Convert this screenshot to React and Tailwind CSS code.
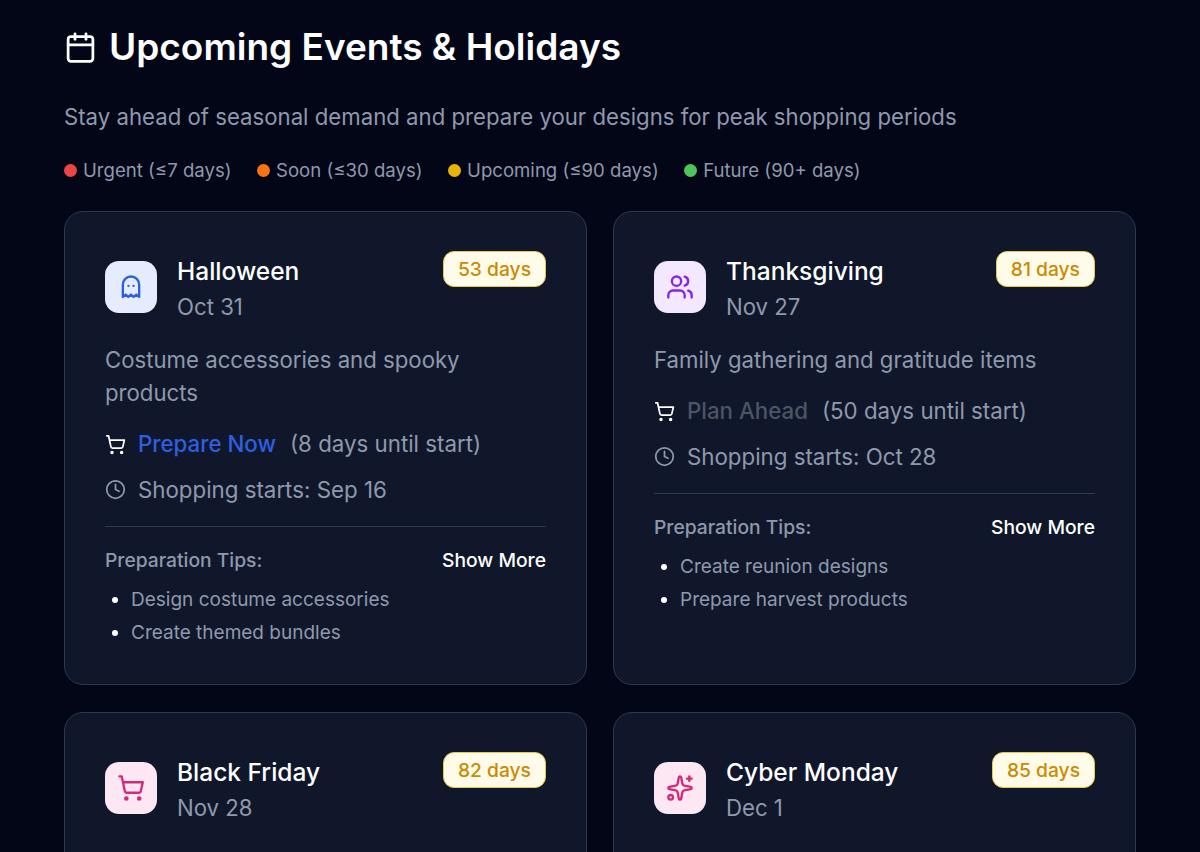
import { Calendar, Clock, ShoppingCart, Sparkles, Users } from "lucide-react";

// lucide's ghost has a different hem, this one has the shallow zigzag of the design
function GhostIcon({ className }) {
  return (
    <svg className={className} viewBox="0 0 24 24" fill="none" stroke="currentColor" strokeWidth="2" strokeLinecap="round" strokeLinejoin="round">
      <path d="M5 20.5V10a7 7 0 0 1 14 0v10.5l-2.4-2-2.3 2-2.3-2-2.3 2-2.3-2z" />
      <path d="M9.8 11h.01" />
      <path d="M14.2 11h.01" />
    </svg>
  );
}

const events = [
  {
    name: "Halloween",
    date: "Oct 31",
    days: "53 days",
    Icon: GhostIcon,
    iconBox: "bg-[#e4ecfd] text-[#2f5fe0]",
    description: "Costume accessories and spooky products",
    status: "Prepare Now",
    statusColor: "text-[#2f5fe0]",
    until: "(8 days until start)",
    starts: "Shopping starts: Sep 16",
    tips: ["Design costume accessories", "Create themed bundles"],
  },
  {
    name: "Thanksgiving",
    date: "Nov 27",
    days: "81 days",
    Icon: Users,
    iconBox: "bg-[#f3e8ff] text-[#8027e8]",
    description: "Family gathering and gratitude items",
    status: "Plan Ahead",
    statusColor: "text-[#4b5563]",
    until: "(50 days until start)",
    starts: "Shopping starts: Oct 28",
    tips: ["Create reunion designs", "Prepare harvest products"],
  },
  {
    name: "Black Friday",
    date: "Nov 28",
    days: "82 days",
    Icon: ShoppingCart,
    iconBox: "bg-[#fce7f3] text-[#d42a78]",
  },
  {
    name: "Cyber Monday",
    date: "Dec 1",
    days: "85 days",
    Icon: Sparkles,
    iconBox: "bg-[#fce7f3] text-[#d42a78]",
  },
];

const legend = [
  { label: "Urgent (≤7 days)", color: "bg-[#ef4444]" },
  { label: "Soon (≤30 days)", color: "bg-[#f97316]" },
  { label: "Upcoming (≤90 days)", color: "bg-[#eab308]" },
  { label: "Future (90+ days)", color: "bg-[#4fc35c]" },
];

function EventCard({ event }) {
  const { Icon } = event;
  return (
    <div className="bg-[#10172a] border border-[#2f394c] rounded-[19px] px-10 pt-[39px] pb-[36px] h-[474px]">
      <div className="flex items-start justify-between">
        <div className="flex items-center gap-5">
          <div className={`w-[52px] h-[52px] rounded-[14px] flex items-center justify-center ${event.iconBox}`}>
            <Icon className="w-7 h-7" strokeWidth={2} />
          </div>
          <div>
            <div className="text-white text-[24.5px] leading-[40px] font-medium">{event.name}</div>
            <div className="text-[#8f99ad] text-[22.2px] leading-[32px]">{event.date}</div>
          </div>
        </div>
        <div className="bg-[#fefce8] border border-[#e4c84a] text-[#ca8a04] rounded-[11px] px-[14px] h-9 flex items-center text-[19.25px] font-medium">
          {event.days}
        </div>
      </div>

      {event.description && (
        <>
          <p className="text-[#8f99ad] text-[22.2px] leading-[33px] mt-5">{event.description}</p>

          <div className="flex items-center mt-[18.5px] h-[33px] text-[22.3px]">
            <ShoppingCart className="w-[21px] h-[21px] text-white mr-3" strokeWidth={2} />
            <span className={`font-medium ${event.statusColor}`}>{event.status}</span>
            <span className="text-[#8f99ad] ml-[14px]">{event.until}</span>
          </div>
          <div className="flex items-center mt-[12.5px] h-[33px] text-[22.3px] text-[#8f99ad]">
            <Clock className="w-[21px] h-[21px] mr-3" strokeWidth={2} />
            <span>{event.starts}</span>
          </div>

          <div className="border-t border-[#2f394c] mt-5 pt-[19px]">
            <div className="flex items-center justify-between h-[28px] text-[19.25px]">
              <span className="text-[#8f99ad] font-medium">Preparation Tips:</span>
              <span className="text-white font-medium">Show More</span>
            </div>
            <ul className="mt-[9px] pl-[26px] list-disc marker:text-white text-[#8f99ad] text-[19px] leading-[33px]">
              {event.tips.map((tip) => (
                <li key={tip}>{tip}</li>
              ))}
            </ul>
          </div>
        </>
      )}
    </div>
  );
}

export default function App() {
  return (
    <div className="h-screen overflow-hidden bg-[#020617] px-16 pt-[24px] font-['Inter',sans-serif]">
      <div className="flex items-center gap-3 h-[46px]">
        <Calendar className="w-[33px] h-[33px] text-white" strokeWidth={2} />
        <h1 className="text-white text-[37px] leading-[46px] font-semibold">Upcoming Events &amp; Holidays</h1>
      </div>
      <p className="text-[#8f99ad] text-[22.2px] leading-[33px] mt-[29.5px]">
        Stay ahead of seasonal demand and prepare your designs for peak shopping periods
      </p>
      <div className="flex items-center gap-[25.5px] mt-[24.5px] h-[28px]">
        {legend.map((item) => (
          <div key={item.label} className="flex items-center gap-[6px] text-[#8f99ad] text-[18.6px]">
            <span className={`w-[13px] h-[13px] rounded-full ${item.color}`}></span>
            {item.label}
          </div>
        ))}
      </div>
      <div className="grid grid-cols-2 gap-x-[26px] gap-y-[27px] mt-[26px]">
        {events.map((event) => (
          <EventCard key={event.name} event={event} />
        ))}
      </div>
    </div>
  );
}
